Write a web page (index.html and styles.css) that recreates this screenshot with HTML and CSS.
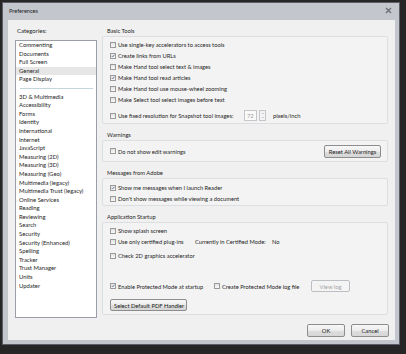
FILE: index.html
```html
<!DOCTYPE html>
<html>
<head>
  <title>Preferences</title>
  <link rel="stylesheet" href="styles.css">
</head>

<body>
  <div class="screen">
    <div class="window">
      <div class="titlebar">
        <span class="title">Preferences</span>
        <svg class="close" width="7" height="7" viewBox="0 0 7 7">
          <path d="M1 1 L6 6 M6 1 L1 6" stroke="#6a6d74" stroke-width="1.3"/>
        </svg>
      </div>

      <div class="client">
        <div class="main">
          <div class="sidebar">
            <div class="label">Categories:</div>
            <ul class="cat-list">
              <li>Commenting</li>
              <li>Documents</li>
              <li>Full Screen</li>
              <li class="selected">General</li>
              <li>Page Display</li>
              <li class="sep"></li>
              <li>3D &amp; Multimedia</li>
              <li>Accessibility</li>
              <li>Forms</li>
              <li>Identity</li>
              <li>International</li>
              <li>Internet</li>
              <li>JavaScript</li>
              <li>Measuring (2D)</li>
              <li>Measuring (3D)</li>
              <li>Measuring (Geo)</li>
              <li>Multimedia (legacy)</li>
              <li>Multimedia Trust (legacy)</li>
              <li>Online Services</li>
              <li>Reading</li>
              <li>Reviewing</li>
              <li>Search</li>
              <li>Security</li>
              <li>Security (Enhanced)</li>
              <li>Spelling</li>
              <li>Tracker</li>
              <li>Trust Manager</li>
              <li>Units</li>
              <li>Updater</li>
            </ul>
          </div>

          <div class="panel">
            <div class="group-title">Basic Tools</div>
            <div class="group basic">
              <div class="check"><span class="box"></span>Use single-key accelerators to access tools</div>
              <div class="check"><span class="box on"><svg viewBox="0 0 6 6"><path d="M1 3.2 L2.4 4.6 L5 1.2" fill="none" stroke="#3a4a6a" stroke-width="1"/></svg></span>Create links from URLs</div>
              <div class="check"><span class="box"></span>Make Hand tool select text &amp; images</div>
              <div class="check"><span class="box on"><svg viewBox="0 0 6 6"><path d="M1 3.2 L2.4 4.6 L5 1.2" fill="none" stroke="#3a4a6a" stroke-width="1"/></svg></span>Make Hand tool read articles</div>
              <div class="check"><span class="box"></span>Make Hand tool use mouse-wheel zooming</div>
              <div class="check"><span class="box"></span>Make Select tool select images before text</div>
              <div class="snapshot">
                <div class="check wide"><span class="box"></span>Use fixed resolution for Snapshot tool images:</div>
                <span class="num">72</span>
                <span class="spin"><i class="up"></i><i class="down"></i></span>
                <span class="unit">pixels/inch</span>
              </div>
            </div>

            <div class="group-title">Warnings</div>
            <div class="group warnings">
              <div class="check"><span class="box"></span>Do not show edit warnings</div>
              <button class="btn reset">Reset All Warnings</button>
            </div>

            <div class="group-title">Messages from Adobe</div>
            <div class="group messages">
              <div class="check"><span class="box on"><svg viewBox="0 0 6 6"><path d="M1 3.2 L2.4 4.6 L5 1.2" fill="none" stroke="#3a4a6a" stroke-width="1"/></svg></span>Show me messages when I launch Reader</div>
              <div class="check"><span class="box"></span>Don't show messages while viewing a document</div>
            </div>

            <div class="group-title">Application Startup</div>
            <div class="group startup">
              <div class="check"><span class="box"></span>Show splash screen</div>
              <div class="row">
                <div class="check c1"><span class="box"></span>Use only certified plug-ins</div>
                <span class="mode">Currently in Certified Mode:</span>
                <span>No</span>
              </div>
              <div class="check gap3"><span class="box"></span>Check 2D graphics accelerator</div>
              <div class="row protected">
                <div class="check c2"><span class="box on"><svg viewBox="0 0 6 6"><path d="M1 3.2 L2.4 4.6 L5 1.2" fill="none" stroke="#3a4a6a" stroke-width="1"/></svg></span>Enable Protected Mode at startup</div>
                <div class="check c3"><span class="box"></span>Create Protected Mode log file</div>
                <button class="btn disabled viewlog">View log</button>
              </div>
              <button class="btn handler">Select Default PDF Handler</button>
            </div>
          </div>
        </div>

        <div class="footer">
          <button class="btn big">OK</button>
          <button class="btn big">Cancel</button>
        </div>
      </div>
    </div>
  </div>
</body>
</html>
```

FILE: styles.css
```css
* {
  margin: 0;
  padding: 0;
  box-sizing: border-box;
}

body {
  background: #262626;
  font-family: Lato, 'Open Sans', sans-serif;
  font-size: 5.75px;
  color: #1e1e1e;
}

.screen {
  width: 406px;
  height: 354px;
  padding: 2px 6px 9px 2px;
}

.window {
  width: 398px;
  height: 343px;
  background: #c3c6cd;
  border: 1px solid #5c5f66;
  display: flex;
  flex-direction: column;
}

.titlebar {
  height: 17px;
  display: flex;
  align-items: center;
  justify-content: space-between;
  padding: 0 7px 3px 6px;
  font-size: 5.6px;
}

.close {
  display: block;
}

.client {
  margin: 0 4px 4px 5px;
  flex: 1;
  background: #f0f0f0;
  padding: 7px 6px 3px 7px;
  display: flex;
  flex-direction: column;
}

.main {
  display: flex;
  gap: 5px;
}

.sidebar {
  width: 82px;
}

.label {
  line-height: 8px;
  margin-bottom: 5px;
  padding-left: 2px;
  font-size: 6px;
}

.cat-list {
  list-style: none;
  height: 278px;
  background: #fff;
  border: 1px solid #9a9ea6;
  font-size: 5.9px;
}

.cat-list li {
  height: 8.6px;
  line-height: 8.6px;
  padding-left: 3px;
  white-space: nowrap;
}

.cat-list .selected {
  background: #e6e6e6;
}

.cat-list .sep {
  display: flex;
  align-items: center;
  padding: 0 3px 0 4px;
}

.cat-list .sep::after {
  content: "";
  flex: 1;
  height: 1px;
  background: #c3d6dd;
}

.panel {
  width: 286px;
}

.group-title {
  line-height: 8px;
  margin: 7px 0 1px 5px;
}

.group-title:first-child {
  margin-top: 0;
}

.group {
  border: 1px solid #dcdfe2;
  border-radius: 2px;
  background: #f3f3f3;
  padding: 2px 7px 1px 7px;
}

.check {
  display: flex;
  align-items: center;
  height: 11px;
  white-space: nowrap;
}

.box {
  width: 6px;
  height: 6px;
  margin-right: 2px;
  border: 1px solid #9a9a9a;
  background: linear-gradient(#e2e2e2, #fafafa);
  flex-shrink: 0;
}

.box svg {
  display: block;
  width: 4px;
  height: 4px;
}

.snapshot {
  display: flex;
  align-items: center;
  height: 13px;
  margin-top: 4px;
}

.check.wide {
  width: 134px;
}

.num {
  width: 13px;
  height: 11px;
  border: 1px solid #c4c6ca;
  background: #fafafa;
  color: #9a9a9a;
  line-height: 9px;
  padding-left: 2px;
}

.spin {
  width: 7px;
  height: 11px;
  margin-left: 2px;
  border: 1px solid #c4c6ca;
  display: flex;
  flex-direction: column;
  align-items: center;
  justify-content: space-around;
  background: #f3f3f3;
}

.spin i {
  width: 0;
  height: 0;
  border-left: 1.5px solid transparent;
  border-right: 1.5px solid transparent;
}

.spin .up {
  border-bottom: 1.5px solid #aaa;
}

.spin .down {
  border-top: 1.5px solid #aaa;
}

.unit {
  margin-left: 7px;
}

.warnings {
  height: 22px;
  padding: 0 6px 0 7px;
  display: flex;
  align-items: center;
  justify-content: space-between;
}

.messages {
  padding: 3px 7px 1px 7px;
}

.startup {
  padding: 2px 7px 3px 7px;
}

.row {
  display: flex;
  align-items: center;
  height: 11px;
  white-space: nowrap;
}

.c1 {
  width: 85px;
}

.mode {
  width: 77px;
}

.gap3 {
  margin-top: 3px;
}

.protected {
  height: 12px;
  margin-top: 19px;
}

.c2 {
  width: 104px;
}

.c3 {
  width: 97px;
}

.btn {
  font-family: inherit;
  font-size: 5.8px;
  color: #1e1e1e;
  border: 1px solid #8d8d8d;
  border-radius: 2px;
  background: linear-gradient(#f8f8f8 0%, #ececec 50%, #dedede 51%, #d6d6d6 100%);
  height: 13px;
  padding: 0 3px;
  white-space: nowrap;
}

.reset {
  width: 57px;
}

.viewlog {
  width: 39px;
  height: 12px;
}

.btn.disabled {
  color: #a4a4a4;
  border-color: #bcc0c4;
  background: #f4f4f4;
}

.handler {
  margin-top: 7px;
  width: 77px;
  height: 12px;
}

.footer {
  display: flex;
  justify-content: flex-end;
  gap: 6px;
  margin-top: 6px;
}

.btn.big {
  width: 38px;
}
```
